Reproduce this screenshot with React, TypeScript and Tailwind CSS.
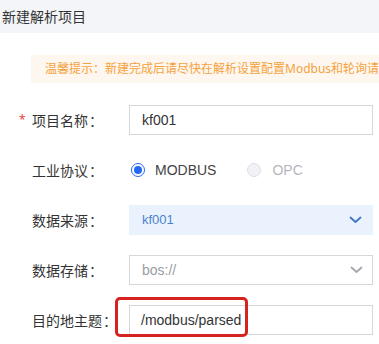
import { ReactNode } from 'react';

const cn = '"Noto Sans", "Noto Sans CJK SC", sans-serif';
const latin = '"Liberation Sans", "Noto Sans CJK SC", sans-serif';

function Chevron({ color }: { color: string }) {
  return (
    <svg width="13" height="8" viewBox="0 0 13 8" fill="none">
      <polyline points="1.5,1.5 6.5,6 11.5,1.5" stroke={color} strokeWidth="1.8" strokeLinecap="round" strokeLinejoin="round" />
    </svg>
  );
}

function Row({ label, required, children, className = '' }: { label: string; required?: boolean; children: ReactNode; className?: string }) {
  return (
    <div className={`flex items-center h-[30px] pl-[19px] ${className}`}>
      <div className="w-[110px] flex items-center text-[14px] text-[#333]">
        <span className="w-[13px] text-[#e8453c] text-[12px] leading-none">{required ? '*' : ''}</span>
        <span>{label}</span>
        <span className="ml-[1px]">：</span>
      </div>
      {children}
    </div>
  );
}

export default function App() {
  return (
    <div className="w-[379px] h-[344px] bg-white overflow-hidden" style={{ fontFamily: cn }}>
      <div className="h-[33px] bg-[#f4f5f8] flex items-center pl-[2px] text-[14px] text-[#333]">新建解析项目</div>

      <div className="mt-[22px] ml-[31px] h-[28px] bg-[#fef7ef] flex items-center pl-[14px] text-[12px] text-[#f5a23c] whitespace-nowrap overflow-hidden">
        温馨提示：新建完成后请尽快在解析设置配置Modbus和轮询请求
      </div>

      <div className="mt-[22px] flex flex-col gap-[20px]">
        <Row label="项目名称" required>
          <div className="w-[244px] h-[30px] border border-[#d4d7dc] flex items-center pl-[12px] text-[14px] text-[#333]" style={{ fontFamily: latin }}>kf001</div>
        </Row>

        <Row label="工业协议">
          <div className="flex items-center pl-[2px] text-[14px]" style={{ fontFamily: latin }}>
            <span className="w-[14px] h-[14px] rounded-full border border-[#2468f2] flex items-center justify-center">
              <span className="w-[8px] h-[8px] rounded-full bg-[#2468f2]" />
            </span>
            <span className="ml-[10px] text-[#444]">MODBUS</span>
            <span className="ml-[31px] w-[14px] h-[14px] rounded-full border border-[#dcdfe4] bg-[#f1f2f5]" />
            <span className="ml-[11px] text-[#b4b7bd]">OPC</span>
          </div>
        </Row>

        <Row label="数据来源">
          <div className="w-[244px] h-[30px] bg-[#eaf3fd] flex items-center justify-between pl-[13px] pr-[11px] text-[13px] text-[#4a82d0]" style={{ fontFamily: latin }}>
            <span>kf001</span>
            <Chevron color="#3f76c4" />
          </div>
        </Row>

        <Row label="数据存储">
          <div className="w-[244px] h-[30px] border border-[#d4d7dc] flex items-center justify-between pl-[12px] pr-[9px] text-[14px] text-[#9a9da3]" style={{ fontFamily: latin }}>
            <span>bos://</span>
            <Chevron color="#a3a6ab" />
          </div>
        </Row>

        <Row label="目的地主题" className="relative">
          <div className="w-[244px] h-[30px] border border-[#d4d7dc] flex items-center pl-[11px] text-[14px] text-[#333]" style={{ fontFamily: latin }}>/modbus/parsed</div>
          <div className="absolute left-[115px] top-[-8px] w-[133px] h-[40px] border-[3px] border-[#d5231f] rounded-[5px]" />
        </Row>
      </div>
    </div>
  );
}
